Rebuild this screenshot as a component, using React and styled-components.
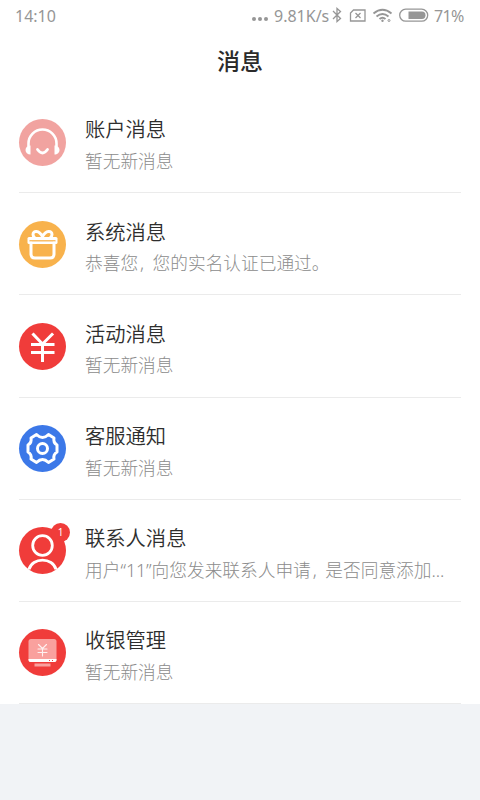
import React from "react";
import styled, { createGlobalStyle } from "styled-components";

const GlobalStyle = createGlobalStyle`
  * {
    box-sizing: border-box;
  }
  body {
    margin: 0;
    background: #f1f3f6;
    font-family: "Noto Sans", "Noto Sans CJK SC", sans-serif;
  }
`

const Screen = styled.div`
  width: 480px;
  height: 800px;
  overflow: hidden;
  background: #f1f3f6;
`

const Panel = styled.div`
  height: 704px;
  background: #fff;
`

const StatusBar = styled.div`
  display: flex;
  align-items: center;
  justify-content: space-between;
  height: 32px;
  padding: 0 16px 0 15px;
  color: #969696;
  font-size: 16px;
  line-height: 32px;
`

const StatusIcons = styled.div`
  display: flex;
  align-items: center;

  svg {
    display: block;
  }
`

const StatusText = styled.span`
  width: ${p => p.$width}px;
  white-space: nowrap;
  letter-spacing: ${p => p.$spacing || 0}px;
`

const Header = styled.h1`
  height: 59px;
  margin: 0;
  padding-top: 11px;
  color: #2b2b2b;
  font-size: 23px;
  font-weight: 500;
  line-height: 36px;
  text-align: center;
`

const List = styled.div`
  padding: 0 19px;
`

const Row = styled.div`
  display: flex;
  height: 102.2px;
  border-bottom: 1px solid #ebebeb;
`

const Avatar = styled.div`
  position: relative;
  width: 47px;
  height: 47px;
  margin-top: 27.5px;
  border-radius: 50%;
  background: ${p => p.$color};

  svg {
    display: block;
  }
`

const Badge = styled.span`
  position: absolute;
  top: -4px;
  right: -4px;
  width: 19px;
  height: 19px;
  border-radius: 50%;
  background: #f03c3a;
  color: #fff;
  font-size: 10px;
  line-height: 19px;
  text-align: center;
`

const Content = styled.div`
  flex: 1;
  min-width: 0;
  padding: 23.4px 0 0 19px;
`

const Title = styled.div`
  color: #2e2e2e;
  font-size: 20.3px;
  font-weight: 350;
  line-height: 30px;
  white-space: nowrap;
`

const Summary = styled.div`
  margin-top: 2.6px;
  color: #8c8c8c;
  font-size: 17.7px;
  font-weight: 300;
  line-height: 28px;
  white-space: nowrap;
`

const Comma = styled.span`
  display: inline-block;
  width: 14.5px;
  padding-left: 2px;
`

const line = { fill: "none", stroke: "#fff", strokeLinecap: "round", strokeLinejoin: "round" };

function Headset() {
  return (
    <svg width="47" height="47" viewBox="0 0 47 47">
      <path d="M9.5 27V24.5a14 14 0 0 1 28 0V27" {...line} strokeWidth="2.6" />
      <path d="M11.5 26.5v9c-3 0-5-2-5-4.5s2-4.5 5-4.5zM35.5 26.5v9c3 0 5-2 5-4.5s-2-4.5-5-4.5z" fill="#fff" />
      <path d="M18.5 30.5q5 7 10 0" {...line} strokeWidth="2.8" />
    </svg>
  )
}

function Gift() {
  return (
    <svg width="47" height="47" viewBox="0 0 47 47">
      <rect x="8.500" y="16" width="30" height="7" rx="1.500" fill="#fff" />
      <path d="M10.500 19.800h26" stroke="#f8b24c" strokeWidth="1.3" />
      <g {...line} strokeWidth="3">
        <path d="M12 22v11q0 4 4 4h15q4 0 4-4V22" />
        <path d="M23.500 15.500C20 9 14 9.500 14 13.500q0 1.500 1.500 3M23.500 15.500C27 9 33 9.500 33 13.500q0 1.500-1.500 3" />
      </g>
    </svg>
  )
}

function Yuan() {
  return (
    <svg width="47" height="47" viewBox="0 0 47 47">
      <path d="M14.5 11.5l9 9.5L33 11.5M13.5 21.5H34M13.5 29.5H34M23.5 21.5v16" {...line} strokeLinecap="square" strokeWidth="3" />
    </svg>
  )
}

function Gear() {
  return (
    <svg width="47" height="47" viewBox="0 0 47 47">
      <path
        d="M17.5 9.5Q20.5 12.500 23.5 12.500Q26.500 12.500 29.5 9.5L35 13Q34 17.500 38 20V27Q34 29.500 35 34L29.500 37.500Q26.500 34.500 23.500 34.500Q20.500 34.500 17.500 37.500L12 34Q13 29.500 9 27V20Q13 17.500 12 13Z"
        {...line}
        strokeWidth="3"
      />
      <circle cx="23.5" cy="23.5" r="5" {...line} strokeWidth="3" />
    </svg>
  )
}

function Person() {
  return (
    <svg width="47" height="47" viewBox="0 0 47 47">
      <circle cx="23.5" cy="18.5" r="9.8" {...line} strokeWidth="2.8" />
      <path d="M10 42.5C13 30 34 30 37 42.5" {...line} strokeLinecap="butt" strokeWidth="2.8" />
    </svg>
  )
}

function Cashier() {
  return (
    <svg width="47" height="47" viewBox="0 0 47 47">
      <rect x="9.5" y="10" width="28" height="23" rx="2.5" fill="#f9a19e" />
      <path d="M9.5 30h28v1q0 2-2 2h-24q-2 0-2-2z" fill="#fff" />
      <path d="M30 31.5h1M33 31.5h1" stroke="#f03c3a" strokeWidth="1.2" />
      <path d="M15.5 34.5h16v3h-16z" fill="#f9a19e" />
      <path d="M19.5 15.5l4 4 4-4M19 20h9M19 23.5h9M23.5 19.5V27" {...line} strokeWidth="1.1" opacity=".85" />
    </svg>
  )
}

const messages = [
  { title: "账户消息", color: "#f1a3a0", icon: <Headset />, text: "暂无新消息" },
  { title: "系统消息", color: "#f8b24c", icon: <Gift />, text: <>恭喜您<Comma>,</Comma>您的实名认证已通过。</> },
  { title: "活动消息", color: "#f03c3a", icon: <Yuan />, text: "暂无新消息" },
  { title: "客服通知", color: "#3c78e8", icon: <Gear />, text: "暂无新消息" },
  {
    title: "联系人消息",
    color: "#f03c3a",
    icon: <Person />,
    badge: 1,
    text: <>用户“11”向您发来联系人申请<Comma>,</Comma>是否同意添加...</>,
  },
  { title: "收银管理", color: "#f03c3a", icon: <Cashier />, text: "暂无新消息" },
];

function Status() {
  return (
    <StatusBar>
      <span>14:10</span>
      <StatusIcons>
        <svg width="23" height="32" fill="#969696">
          <circle cx="3" cy="19" r="2" />
          <circle cx="9" cy="19" r="2" />
          <circle cx="15" cy="19" r="2" />
        </svg>
        <StatusText $width={56}>9.81K/s</StatusText>
        <svg width="104" height="32" fill="none" stroke="#969696" strokeWidth="1.3">
          <path d="M3 11l7.5 7.5-3.5 3v-13l3.5 3L3 19" />
          <path d="M23.5 10H35v11H20.5v-8z" />
          <path d="M25.5 13l5 5M30.5 13l-5 5" />
          <path d="M43.5 13.500q9-7.500 18 0M46.500 16.500q6-5 12 0M49.500 19q3-2.500 6 0" strokeWidth="1.9" />
          <circle cx="52.5" cy="20.800" r="1.2" fill="#969696" stroke="none" />
          <circle cx="59" cy="20.5" r="1" strokeWidth="1" />
          <rect x="69.7" y="9.2" width="28" height="12" rx="6" />
          <path d="M78.5 11.5H92q3.5 0 3.5 3.700T92 19H78.5z" fill="#969696" stroke="none" />
        </svg>
        <StatusText $width={30} $spacing={-0.7}>71%</StatusText>
      </StatusIcons>
    </StatusBar>
  )
}

export default function App() {
  return (
    <Screen>
      <GlobalStyle />
      <Panel>
        <Status />
        <Header>消息</Header>
        <List>
          {messages.map(m => (
            <Row key={m.title}>
              <Avatar $color={m.color}>
                {m.icon}
                {m.badge && <Badge>{m.badge}</Badge>}
              </Avatar>
              <Content>
                <Title>{m.title}</Title>
                <Summary>{m.text}</Summary>
              </Content>
            </Row>
          ))}
        </List>
      </Panel>
    </Screen>
  );
}
